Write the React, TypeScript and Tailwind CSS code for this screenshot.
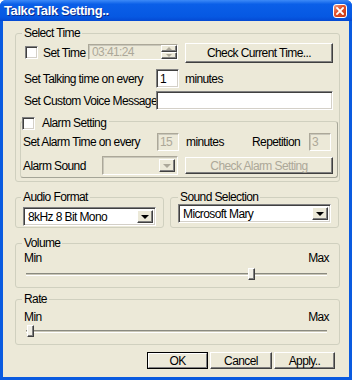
const sunken = 'border border-t-[#808080] border-l-[#808080] border-b-white border-r-white shadow-[inset_1px_1px_0_#404040,inset_-1px_-1px_0_#D4D0C8]'
const dimSunken = 'border border-t-[#ACA899] border-l-[#ACA899] border-b-white border-r-white shadow-[inset_1px_1px_0_#C9C7BA]'
const raised = 'border border-t-white border-l-white border-b-[#404040] border-r-[#404040] shadow-[inset_-1px_-1px_0_#808080]'
const group = 'border border-[#D0D0BF] rounded-[3px]'

function Check({ className = '' }: { className?: string }) {
  return <span className={`block w-[13px] h-[13px] shrink-0 bg-white ${sunken} ${className}`} />
}

function Arrow({ dim }: { dim?: boolean }) {
  return (
    <span
      className={`block w-0 h-0 border-l-[4px] border-r-[4px] border-t-[4px] border-l-transparent border-r-transparent ${dim ? 'border-t-[#ACA899]' : 'border-t-black'}`}
    />
  )
}

function Combo({ text, w, dim }: { text?: string; w: string; dim?: boolean }) {
  return (
    <div className={`${w} h-[19px] flex items-center p-[2px] ${dim ? 'bg-[#ECE9D8] ' + dimSunken : 'bg-white ' + sunken}`}>
      <span className="flex-1 pl-[2px] overflow-hidden">{text}</span>
      <span className={`w-[16px] h-full flex items-center justify-center bg-[#ECE9D8] ${raised}`}>
        <Arrow dim={dim} />
      </span>
    </div>
  )
}

function Btn({ children, w, h = 'h-[20px]', dim, def }: { children: React.ReactNode; w: string; h?: string; dim?: boolean; def?: boolean }) {
  if (def) {
    return (
      <div className={`${w} ${h} border border-black`}>
        <div className="w-full h-full flex items-center justify-center bg-[#ECE9D8] border border-t-white border-l-white border-b-[#808080] border-r-[#808080]">{children}</div>
      </div>
    )
  }
  return (
    <div className={`${w} ${h} flex items-center justify-center bg-[#ECE9D8] ${raised} ${dim ? 'text-[#ACA899]' : ''}`}>
      {children}
    </div>
  )
}

function Slider({ pos }: { pos: string }) {
  return (
    <div className="relative h-[12px] ml-[2px] mr-[2px]">
      <div className="pt-[5px]">
        <div className="h-[3px] border-t border-t-[#8A8A80] border-b border-b-white bg-[#C9C6B6]" />
      </div>
      <div className={`absolute top-0 ${pos} w-[7px] h-[12px] bg-[#F1EFE6] ${raised}`} />
    </div>
  )
}

export default function App() {
  return (
    <div className="w-[352px] h-[380px] bg-[#0A5BE0] rounded-t-[6px] flex flex-col whitespace-nowrap font-['Liberation_Sans',Arial,sans-serif] text-[12px] tracking-[-0.6px] leading-[14px] text-black select-none">
      <div className="h-[21px] flex items-center pl-[4px] pr-[4px] rounded-t-[6px] bg-[linear-gradient(180deg,#3D8AF7_0%,#0A5FE8_20%,#0658E2_80%,#0449D2_100%)]">
        <span className="font-bold text-white text-[13px] tracking-[-0.4px] [text-shadow:1px_1px_0_#0A2A8A]">
          TalkcTalk Setting..
        </span>
        <div className="ml-auto mr-[1px] w-[14px] h-[14px] rounded-[3px] border border-white bg-[linear-gradient(135deg,#F0A08A_0%,#E2542E_40%,#C8360E_100%)] flex items-center justify-center">
          <svg width="8" height="8" viewBox="0 0 8 8">
            <path d="M1 1L7 7M7 1L1 7" stroke="#fff" strokeWidth="1.8" strokeLinecap="square" />
          </svg>
        </div>
      </div>

      <div className="flex-1 mx-[3px] mb-[3px] bg-[#ECE9D8] flex flex-col">
        {/* Select Time */}
        <fieldset className={`ml-[12px] mt-[5px] w-[325px] pl-[8px] ${group}`}>
          <legend className="ml-[-2px] px-[2px] h-[14px]">Select Time</legend>
          <div className="mt-[3px] h-[20px] flex items-start">
            <Check className="ml-[1px] mt-[3px]" />
            <span className="ml-[5px] mt-[3px] w-[45px]">Set Time</span>
            <div className={`mt-[1px] w-[90px] h-[16px] flex items-center bg-[#ECE9D8] ${dimSunken}`}>
              <span className="flex-1 pl-[3px] text-[#ACA899]">03:41:24</span>
              <div className="w-[16px] h-full flex flex-col">
                <span className={`flex-1 flex items-center justify-center ${raised}`}>
                  <span className="block w-0 h-0 border-l-[3px] border-r-[3px] border-b-[3px] border-l-transparent border-r-transparent border-b-[#ACA899]" />
                </span>
                <span className={`flex-1 flex items-center justify-center ${raised}`}>
                  <span className="block w-0 h-0 border-l-[3px] border-r-[3px] border-t-[3px] border-l-transparent border-r-transparent border-t-[#ACA899]" />
                </span>
              </div>
            </div>
            <div className="ml-[7px]">
              <Btn w="w-[148px]">Check Current Time...</Btn>
            </div>
          </div>

          <div className="mt-[6px] h-[19px] flex items-center">
            <span className="w-[132px]">Set Talking time on every</span>
            <div className={`w-[23px] h-[19px] flex items-center pl-[3px] bg-white ${sunken}`}>1</div>
            <span className="ml-[6px]">minutes</span>
          </div>

          <div className="mt-[3px] h-[19px] flex items-center">
            <span className="w-[132px]">Set Custom Voice Message</span>
            <div className={`w-[177px] h-[19px] bg-white ${sunken}`} />
          </div>

          {/* Alarm Setting */}
          <fieldset className={`mt-[4px] mb-[3px] ml-[-4px] mr-[1px] pl-[2px] pb-[2px] ${group} border-r-[#A5A597] border-b-[#A5A597]`}>
            <legend className="ml-[-1px] pr-[3px] h-[14px] flex items-start">
              <Check className="mt-[3px]" />
              <span className="ml-[7px] mt-[2px]">Alarm Setting</span>
            </legend>
            <div className="mt-[5px] h-[18px] flex items-center">
              <span className="w-[134px]">Set Alarm Time on every</span>
              <div className={`w-[22px] h-[18px] flex items-center pl-[2px] text-[#ACA899] bg-[#ECE9D8] ${dimSunken}`}>15</div>
              <span className="ml-[7px] w-[66px]">minutes</span>
              <span className="w-[57px]">Repetition</span>
              <div className={`w-[22px] h-[18px] flex items-center pl-[2px] text-[#ACA899] bg-[#ECE9D8] ${dimSunken}`}>3</div>
            </div>
            <div className="mt-[5px] h-[19px] flex items-center">
              <span className="w-[79px]">Alarm Sound</span>
              <Combo w="w-[76px]" dim />
              <div className="ml-[7px]">
                <Btn w="w-[148px]" h="h-[17px]" dim>Check Alarm Setting</Btn>
              </div>
            </div>
          </fieldset>
        </fieldset>

        {/* Audio / Sound */}
        <div className="ml-[12px] mt-[8px] flex">
          <fieldset className={`w-[149px] pl-[7px] pb-[1px] ${group}`}>
            <legend className="ml-[-2px] px-[2px] h-[14px]">Audio Format</legend>
            <div className="mt-[3px]">
              <Combo w="w-[133px]" text="8kHz 8 Bit Mono" />
            </div>
          </fieldset>
          <fieldset className={`ml-[6px] w-[169px] pl-[7px] ${group}`}>
            <legend className="ml-0 px-[2px] h-[14px]">Sound Selection</legend>
            <Combo w="w-[153px]" text="Microsoft Mary" />
          </fieldset>
        </div>

        {/* Volume */}
        <fieldset className={`ml-[12px] mt-[8px] w-[325px] pl-[8px] pr-[10px] pb-[7px] ${group}`}>
          <legend className="ml-[-2px] px-[2px] h-[14px]">Volume</legend>
          <div className="mt-[1px] h-[14px] flex justify-between">
            <span>Min</span>
            <span>Max</span>
          </div>
          <div className="mt-[3px]">
            <Slider pos="left-[222px]" />
          </div>
        </fieldset>

        {/* Rate */}
        <fieldset className={`ml-[12px] mt-[4px] w-[325px] pl-[8px] pr-[10px] pb-[7px] ${group}`}>
          <legend className="ml-[-2px] px-[2px] h-[14px]">Rate</legend>
          <div className="mt-[4px] h-[14px] flex justify-between">
            <span>Min</span>
            <span>Max</span>
          </div>
          <div className="mt-[1px]">
            <Slider pos="left-[1px]" />
          </div>
        </fieldset>

        <div className="mt-[7px] flex justify-end pr-[14px] gap-[2px]">
          <Btn w="w-[61px]" h="h-[17px]" def>OK</Btn>
          <Btn w="w-[62px]" h="h-[17px]">Cancel</Btn>
          <Btn w="w-[61px]" h="h-[17px]">Apply..</Btn>
        </div>
      </div>
    </div>
  )
}
